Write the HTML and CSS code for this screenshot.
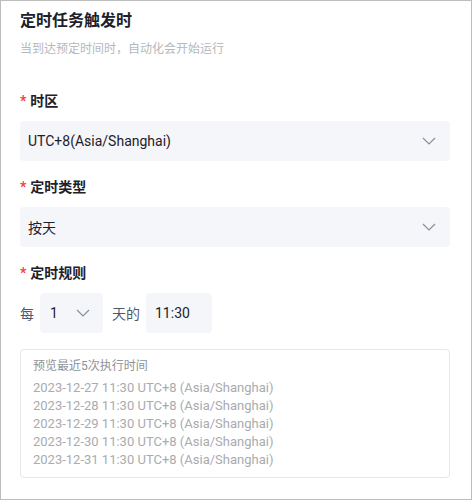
FILE: index.html
```html
<!DOCTYPE html>
<html lang="zh-CN">
<head>
<meta charset="utf-8">
<link rel="stylesheet" href="styles.css">
</head>
<body>
<div class="panel">
  <h1 class="title">定时任务触发时</h1>
  <p class="desc">当到达预定时间时，自动化会开始运行</p>

  <div class="form">
    <div class="item">
      <div class="label"><span class="req">*</span>时区</div>
      <div class="select">
        <span>UTC+8(Asia/Shanghai)</span>
        <svg class="arrow" width="14" height="8" viewBox="0 0 14 8"><path d="M1 1 L7 7 L13 1" fill="none" stroke="#86909c" stroke-width="1.2"/></svg>
      </div>
    </div>

    <div class="item">
      <div class="label"><span class="req">*</span>定时类型</div>
      <div class="select">
        <span>按天</span>
        <svg class="arrow" width="14" height="8" viewBox="0 0 14 8"><path d="M1 1 L7 7 L13 1" fill="none" stroke="#86909c" stroke-width="1.2"/></svg>
      </div>
    </div>

    <div class="item item-rule">
      <div class="label"><span class="req">*</span>定时规则</div>
      <div class="rule">
        <span class="word every">每</span>
        <div class="select small">
          <span>1</span>
          <svg class="arrow" width="14" height="8" viewBox="0 0 14 8"><path d="M1 1 L7 7 L13 1" fill="none" stroke="#86909c" stroke-width="1.2"/></svg>
        </div>
        <span class="word day">天的</span>
        <div class="time">11:30</div>
      </div>
    </div>

    <div class="preview">
      <div class="preview-title">预览最近5次执行时间</div>
      <div class="preview-line">2023-12-27 11:30 UTC+8 (Asia/Shanghai)</div>
      <div class="preview-line">2023-12-28 11:30 UTC+8 (Asia/Shanghai)</div>
      <div class="preview-line">2023-12-29 11:30 UTC+8 (Asia/Shanghai)</div>
      <div class="preview-line">2023-12-30 11:30 UTC+8 (Asia/Shanghai)</div>
      <div class="preview-line">2023-12-31 11:30 UTC+8 (Asia/Shanghai)</div>
    </div>
  </div>
</div>
</body>
</html>
```
FILE: styles.css
```css
* { box-sizing: border-box; }
html, body { margin: 0; padding: 0; background: #fff; }
body {
  font-family: Roboto, "Noto Sans CJK SC", sans-serif;
  color: #1d2129;
}
.panel {
  width: 472px;
  height: 500px;
  border: 1px solid #bdbdbd;
  padding: 8px 21px 0 19px;
  overflow: hidden;
}
.title {
  margin: 0;
  font-size: 16px;
  line-height: 24px;
  font-weight: 700;
  color: #1d2129;
}
.desc {
  margin: 6px 0 0;
  font-size: 12px;
  line-height: 20px;
  color: #b5b8bd;
}
.form { margin-top: 31px; }
.item { margin-bottom: 15px; }
.item-rule { margin-bottom: 16px; }
.label {
  font-size: 14px;
  line-height: 22px;
  font-weight: 700;
  margin-bottom: 9px;
  color: #1d2129;
}
.item-rule .label { margin-bottom: 9px; }
.req {
  color: #f53f3f;
  margin-right: 4px;
  font-weight: 700;
}
.select {
  height: 40px;
  background: #f5f6f9;
  border-radius: 4px;
  display: flex;
  align-items: center;
  justify-content: space-between;
  padding: 0 14px 0 8px;
  font-size: 14px;
  color: #1d2129;
}
.arrow { display: block; }
.rule {
  display: flex;
  align-items: center;
  font-size: 14px;
}
.word { color: #4e5969; }
.every { margin-right: 6px; }
.day { margin: 0 6px 0 9px; }
.select.small {
  width: 63px;
  padding: 0 13px 0 10px;
}
.time {
  width: 66px;
  height: 40px;
  background: #f5f6f9;
  border-radius: 4px;
  display: flex;
  align-items: center;
  padding-left: 9px;
  font-size: 14px;
}
.preview {
  border: 1px solid #e5e6eb;
  border-radius: 4px;
  padding: 7px 12px 8px;
  font-size: 12px;
  line-height: 18px;
}
.preview-title {
  color: #8f9298;
  margin-bottom: 4px;
}
.preview-line {
  color: #a9abaf;
  font-size: 13px;
}
```
